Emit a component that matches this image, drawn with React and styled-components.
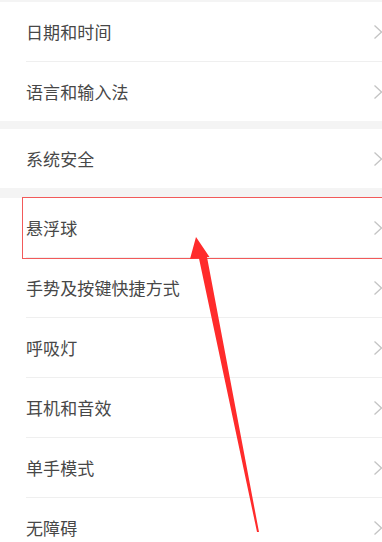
import styled, { createGlobalStyle } from 'styled-components';

const GlobalStyle = createGlobalStyle`
  html, body {
    margin: 0;
    padding: 0;
    background: #ffffff;
    overflow: hidden;
  }
  body {
    font-family: "Noto Sans CJK SC", "Noto Sans", sans-serif;
  }
`;

const Page = styled.div`
  position: relative;
  width: 382px;
  height: 542px;
  overflow: hidden;
  background: #ffffff;
  display: flex;
  flex-direction: column;
`;

const Band = styled.div`
  height: ${p => p.h}px;
  flex-shrink: 0;
  background: #f4f4f4;
`;

const Group = styled.div`
  display: flex;
  flex-direction: column;
  background: #ffffff;
`;

const Row = styled.div`
  height: 59px;
  flex-shrink: 0;
  display: flex;
  align-items: center;
  justify-content: space-between;
  padding-left: 26px;
`;

const Label = styled.span`
  font-size: 17px;
  color: #474747;
  letter-spacing: 0.1px;
  line-height: 1;
`;

const Chevron = styled.svg`
  width: 10px;
  height: 16px;
  margin-right: -1px;
  flex-shrink: 0;
`;

const Divider = styled.div`
  height: 1px;
  margin-left: 26px;
  background: #efefef;
  flex-shrink: 0;
`;

const Highlight = styled.div`
  position: absolute;
  left: 22px;
  top: 197px;
  width: 400px;
  height: 62px;
  border: 1.5px solid #f25a5a;
  box-sizing: border-box;
  pointer-events: none;
`;

const ArrowLayer = styled.svg`
  position: absolute;
  left: 0;
  top: 0;
  width: 382px;
  height: 542px;
  pointer-events: none;
`;

const Arrow = () => (
  <Chevron viewBox="0 0 10 16">
    <path d="M1.5 1.5 L8.5 8 L1.5 14.5" fill="none" stroke="#c4c4c4" strokeWidth="1.3" />
  </Chevron>
);

const Item = ({ label }) => (
  <Row>
    <Label>{label}</Label>
    <Arrow />
  </Row>
);

const groups = [
  ['日期和时间', '语言和输入法'],
  ['系统安全'],
  ['悬浮球', '手势及按键快捷方式', '呼吸灯', '耳机和音效', '单手模式', '无障碍'],
];

const App = () => (
  <>
    <GlobalStyle />
    <Page>
      <Band h={2} />
      <Group>
        <Item label={groups[0][0]} />
        <Divider />
        <Item label={groups[0][1]} />
      </Group>
      <Band h={8} />
      <Group>
        <Item label={groups[1][0]} />
      </Group>
      <Band h={10} />
      <Group>
        {groups[2].map((label, i) => (
          <div key={label}>
            {i > 0 && <Divider />}
            <Item label={label} />
          </div>
        ))}
      </Group>

      <Highlight />
      <ArrowLayer viewBox="0 0 382 542">
        <polygon
          points="196,237 209.5,257 207,257 259,532 257,532 199,258.5 190,259"
          fill="#ff2b2b"
        />
      </ArrowLayer>
    </Page>
  </>
);

export default App;
